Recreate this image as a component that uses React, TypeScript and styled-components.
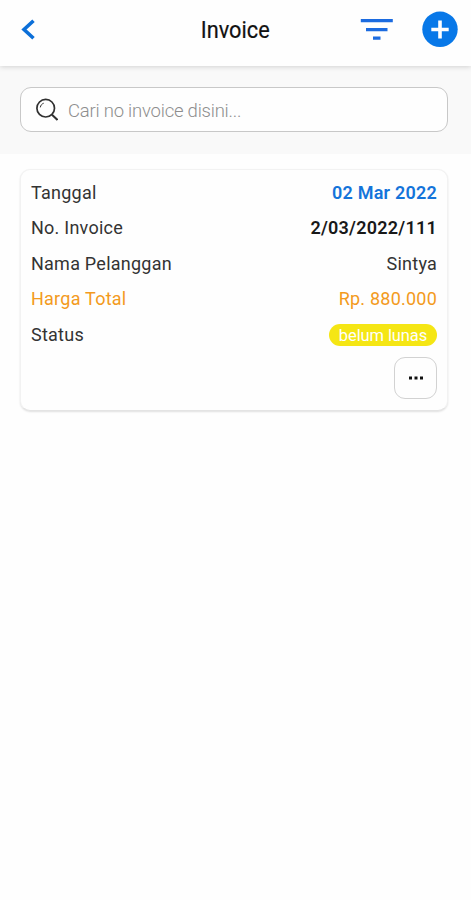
import React from "react";
import styled, { createGlobalStyle } from "styled-components";

const GlobalStyle = createGlobalStyle`
  * { box-sizing: border-box; }
  body { margin: 0; background: #fefefe; font-family: Roboto, "Liberation Sans", sans-serif; }
  button { padding: 0; border: 0; background: none; font: inherit; color: inherit; display: flex; }
`;

const Screen = styled.main`
  display: flex;
  flex-direction: column;
  width: 100%;
  height: 900px;
  overflow: hidden;
  background: #fefefe;
`;

const Header = styled.header`
  display: grid;
  grid-template-columns: 150px 1fr 150px;
  height: 66px;
  flex: none;
  background: #fefefe;
  box-shadow: 0 1px 5px rgba(0, 0, 0, 0.16);
  z-index: 1;
`;

const BackButton = styled.button`
  margin: 19px 0 0 21px;
  justify-self: start;
  align-self: start;
`;

const Title = styled.h1`
  margin: 0;
  padding-top: 16px;
  justify-self: center;
  color: #111;
  font-size: 23.5px;
  line-height: 28px;
  font-weight: 400;
  -webkit-text-stroke: 0.2px #111;
  transform: scaleX(0.925);
`;

const Actions = styled.div`
  display: flex;
  justify-content: flex-end;
  align-items: flex-start;
  gap: 29px;
  padding: 11px 13px 0 0;
`;

const SearchBand = styled.section`
  height: 88px;
  flex: none;
  padding: 21px 23px 0 20px;
  background: #f9f9f9;
`;

const SearchBox = styled.label`
  display: flex;
  align-items: center;
  height: 45px;
  padding-left: 15px;
  gap: 10px;
  border: 1.5px solid #c8c8c8;
  border-radius: 11px;
  background: #fefefe;
`;

const SearchInput = styled.input`
  flex: 1;
  min-width: 0;
  padding: 2px 0 0;
  border: 0;
  outline: 0;
  background: transparent;
  font-family: Roboto, sans-serif;
  font-size: 18.5px;
  font-weight: 300;
  letter-spacing: -0.22px;
  color: #333;
  &::placeholder { color: #8e8e8e; opacity: 1; }
`;

const Card = styled.article`
  height: 242px;
  margin: 15px 23px 0 20px;
  padding: 5px 10px 0;
  border: 1px solid #f2f2f2;
  border-bottom-color: #e4e4e4;
  border-radius: 10px;
  background: #fefefe;
  box-shadow: 0 1px 2px rgba(0, 0, 0, 0.12);
`;

const Row = styled.div<{ $color?: string }>`
  display: flex;
  justify-content: space-between;
  align-items: center;
  height: 35.5px;
  color: ${(p) => p.$color ?? "#333"};
  font-size: 18px;
  line-height: 22px;
`;

const Label = styled.span`
  letter-spacing: 0.24px;
`;

const Value = styled.span<{ $color?: string; $weight?: number; $spacing?: string }>`
  color: ${(p) => p.$color ?? "inherit"};
  font-weight: ${(p) => p.$weight ?? 400};
  letter-spacing: ${(p) => p.$spacing ?? "0.22px"};
`;

const Badge = styled.span`
  width: 108px;
  height: 22px;
  border-radius: 11px;
  background: #f5e614;
  color: #fefefe;
  font-size: 16.5px;
  letter-spacing: -0.1px;
  line-height: 24px;
  text-align: center;
`;

const CardFooter = styled.div`
  display: flex;
  justify-content: flex-end;
  padding-top: 4px;
`;

const MoreButton = styled.button`
  && {
    width: 43px;
    height: 42px;
    border: 1.5px solid #d2d2d2;
    border-radius: 11px;
    align-items: center;
    justify-content: center;
  }
`;

export default function App() {
  return (
    <>
      <GlobalStyle />
      <Screen>
        <Header>
          <BackButton aria-label="Kembali">
            <svg width="15" height="22" viewBox="0 0 15 22" fill="none" stroke="#0c6fd8" strokeWidth="3.6">
              <path d="M12.5 1.7 3 10.5l9.5 8.8" />
            </svg>
          </BackButton>
          <Title>Invoice</Title>
          <Actions>
            <button aria-label="Filter">
              <svg width="33" height="37" viewBox="0 0 33 37" fill="#1b6be0">
                <path d="M.8 8h32v3.2h-32zM6 17h21.5v3.2H6zM13 25.5h7.5v3.2H13z" />
              </svg>
            </button>
            <button aria-label="Tambah">
              <svg width="36" height="37" viewBox="0 0 36 37">
                <circle cx="18" cy="18.3" r="17.7" fill="#0878e8" />
                <path d="M9.3 18.5h17.4M18 9.5v18" stroke="#fefefe" strokeWidth="3.6" />
              </svg>
            </button>
          </Actions>
        </Header>
        <SearchBand>
          <SearchBox>
            <svg width="22" height="23" viewBox="0 0 22 23" fill="none" stroke="#303030" strokeWidth="1.7">
              <circle cx="9.7" cy="10.2" r="8.8" />
              <path d="M16 16.8l5.5 5.2" strokeWidth="2" />
              <path d="M4.3 9.4c.4-2.2 1.5-3.5 3.4-4.2" strokeWidth="1" />
            </svg>
            <SearchInput placeholder="Cari no invoice disini..." />
          </SearchBox>
        </SearchBand>
        <Card>
          <Row>
            <Label>Tanggal</Label>
            <Value $color="#1474da" $weight={600}>02 Mar 2022</Value>
          </Row>
          <Row>
            <Label>No. Invoice</Label>
            <Value $color="#181818" $weight={600} $spacing="0.25px">2/03/2022/111</Value>
          </Row>
          <Row>
            <Label>Nama Pelanggan</Label>
            <Value>Sintya</Value>
          </Row>
          <Row $color="#f39a20">
            <Label>Harga Total</Label>
            <Value>Rp. 880.000</Value>
          </Row>
          <Row>
            <Label>Status</Label>
            <Badge>belum lunas</Badge>
          </Row>
          <CardFooter>
            <MoreButton aria-label="Lainnya">
              <svg width="16" height="4" viewBox="0 0 16 4" fill="#111">
                <path d="M1 .4h3v3.2H1zM6.5 .4h3v3.2h-3zM12 .4h3v3.2h-3z" />
              </svg>
            </MoreButton>
          </CardFooter>
        </Card>
      </Screen>
    </>
  );
}
